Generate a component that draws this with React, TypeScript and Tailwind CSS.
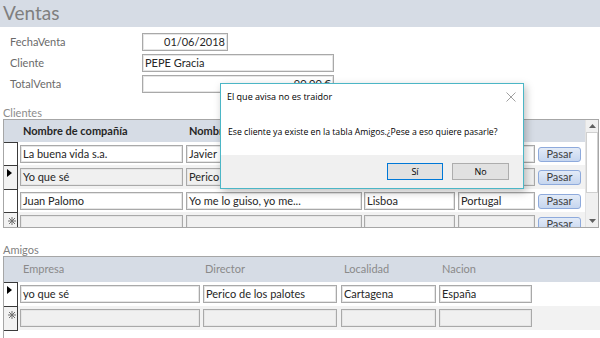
import React from 'react'

const font = "font-['Lato','Liberation_Sans',sans-serif]"

function Field({ className, text, right, dim }: { className: string; text?: string; right?: boolean; dim?: boolean }) {
    return (
        <div
            className={`h-[18px] shrink-0 overflow-hidden whitespace-nowrap border border-[#a9a9a9] px-[2px] text-[11px] leading-[16px] text-[#262626] shadow-[inset_0_0_0_1px_#e6e6e6] ${right ? 'text-right' : ''} ${dim ? 'bg-[#f0f0f0]' : ''} ${className}`}
        >
            {text}
        </div>
    )
}

function Selector({ mark }: { mark?: 'current' | 'new' }) {
    return (
        <div className="flex w-[14px] shrink-0 self-stretch border-t border-r border-[#3a3a3a] pl-[3px] pt-[3px]">
            {mark === 'current' && (
                <svg width="5" height="8" viewBox="0 0 5 8">
                    <path d="M0 0 L5 4 L0 8 Z" fill="#000" />
                </svg>
            )}
            {mark === 'new' && (
                <svg width="8" height="8" viewBox="0 0 8 8" className="ml-[1px] mt-[1px]">
                    <path d="M4 0 V8 M0 4 H8 M1 1 L7 7 M7 1 L1 7" stroke="#707070" strokeWidth="1" />
                </svg>
            )}
        </div>
    )
}

function Pasar() {
    return (
        <div className="ml-[3px] mt-[5px] flex h-[15px] w-[43px] shrink-0 items-center justify-center rounded-[3px] border border-[#8eaadc] bg-gradient-to-b from-[#e3ebf7] to-[#c6d6ef] text-[11px] text-[#404040]">
            Pasar
        </div>
    )
}

const clientes = [
    { a: 'La buena vida s.a.', b: 'Javier', c: '', d: '', h: 'h-[23px]' },
    { a: 'Yo que sé', b: 'Perico', c: '', d: '', h: 'h-[24px]', gray: true, current: true },
    { a: 'Juan Palomo', b: 'Yo me lo guiso, yo me...', c: 'Lisboa', d: 'Portugal', h: 'h-[23px]' },
    { a: '', b: '', c: '', d: '', h: 'h-[23px]', gray: true, isNew: true },
]

export default function App() {
    return (
        <div className={`relative h-[338px] w-[600px] overflow-hidden bg-white ${font}`}>
            {/* Title bar */}
            <div className="h-[27px] bg-[#d6dce5] pl-[3px] text-[19px] leading-[26px] text-[#7f7f7f]">Ventas</div>

            {/* Main fields */}
            <div className="mt-[6px] flex flex-col gap-[3px]">
                <div className="flex items-center">
                    <div className="w-[142px] pl-[10px] text-[11px] text-[#6a6a6a]">FechaVenta</div>
                    <Field className="w-[86px]" text="01/06/2018" right />
                </div>
                <div className="flex items-center">
                    <div className="w-[142px] pl-[10px] text-[11px] text-[#6a6a6a]">Cliente</div>
                    <Field className="w-[192px]" text="PEPE Gracia" />
                </div>
                <div className="flex items-center">
                    <div className="w-[142px] pl-[10px] text-[11px] text-[#6a6a6a]">TotalVenta</div>
                    <Field className="w-[192px]" text="90,00 €" right />
                </div>
            </div>

            {/* Clientes subform */}
            <div className="mt-[13px] h-[13px] pl-[3px] text-[11px] leading-[13px] text-[#8c8c8c]">Clientes</div>
            <div className="ml-[3px] flex h-[109px] w-[596px] overflow-hidden border border-[#a6a6a6]">
                <div className="flex-1">
                    <div className="flex h-[22px] items-center bg-[#d6dce5] text-[11px] font-bold text-[#262626]">
                        <div className="w-[18px]" />
                        <div className="w-[166px] pl-[1px]">Nombre de compañía</div>
                        <div className="pl-[1px]">Nombre</div>
                    </div>
                    {clientes.map((r, i) => (
                        <div key={i} className={`flex ${r.h} ${r.gray ? 'bg-[#f2f2f2]' : ''}`}>
                            <Selector mark={r.current ? 'current' : r.isNew ? 'new' : undefined} />
                            <Field className="ml-[2px] mt-[3px] w-[163px]" text={r.a} dim={r.gray} />
                            <Field className="ml-[3px] mt-[3px] w-[176px]" text={r.b} dim={r.gray} />
                            <Field className="ml-[2px] mt-[3px] w-[91px]" text={r.c} dim={r.gray} />
                            <Field className="ml-[3px] mt-[3px] w-[77px]" text={r.d} dim={r.gray} />
                            <Pasar />
                        </div>
                    ))}
                </div>
                {/* Scrollbar */}
                <div className="flex w-[13px] shrink-0 flex-col border-l border-[#e3e3e3] bg-[#f0f0f0]">
                    <div className="flex h-[12px] items-center justify-center">
                        <svg width="7" height="4" viewBox="0 0 7 4">
                            <path d="M0 4 L3.5 0 L7 4 Z" fill="#606060" />
                        </svg>
                    </div>
                    <div className="h-[61px] border border-[#d0d0d0] bg-white" />
                    <div className="flex-1" />
                    <div className="flex h-[12px] items-center justify-center">
                        <svg width="7" height="4" viewBox="0 0 7 4">
                            <path d="M0 0 L3.5 4 L7 0 Z" fill="#606060" />
                        </svg>
                    </div>
                </div>
            </div>

            {/* Amigos subform */}
            <div className="mt-[15px] h-[13px] pl-[3px] text-[11px] leading-[13px] text-[#7f7f7f]">Amigos</div>
            <div className="ml-[3px] w-[600px] border-t border-l border-[#a6a6a6]">
                <div className="flex h-[25px] items-center bg-[#d6dce5] text-[11px] text-[#8a8a8a]">
                    <div className="w-[18px]" />
                    <div className="w-[183px] pl-[1px]">Empresa</div>
                    <div className="w-[138px]">Director</div>
                    <div className="w-[98px] pl-[1px]">Localidad</div>
                    <div className="pl-[1px]">Nacion</div>
                </div>
                <div className="flex h-[24px]">
                    <Selector mark="current" />
                    <Field className="ml-[2px] mt-[3px] w-[180px]" text="yo que sé" />
                    <Field className="ml-[3px] mt-[3px] w-[134px]" text="Perico de los palotes" />
                    <Field className="ml-[4px] mt-[3px] w-[95px]" text="Cartagena" />
                    <Field className="ml-[3px] mt-[3px] w-[93px]" text="España" />
                </div>
                <div className="flex h-[24px] bg-[#f2f2f2]">
                    <Selector mark="new" />
                    <Field className="ml-[2px] mt-[3px] w-[180px]" dim />
                    <Field className="ml-[3px] mt-[3px] w-[134px]" dim />
                    <Field className="ml-[4px] mt-[3px] w-[95px]" dim />
                    <Field className="ml-[3px] mt-[3px] w-[93px]" dim />
                </div>
                <div className="h-[8px] w-[14px] border-t border-[#3a3a3a]" />
            </div>

            {/* Message box */}
            <div className="absolute left-[220px] top-[83px] flex h-[106px] w-[304px] flex-col border border-[#4bb6c6] bg-white font-['Open_Sans',sans-serif] text-[9px] text-black shadow-[2px_3px_8px_rgba(0,0,0,0.25)]">
                <div className="flex h-[26px] items-center justify-between pl-[6px] pr-[7px]">
                    <span>El que avisa no es traidor</span>
                    <svg width="10" height="10" viewBox="0 0 10 10">
                        <path d="M0.5 0.5 L9.5 9.5 M9.5 0.5 L0.5 9.5" stroke="#a0a0a0" strokeWidth="1" />
                    </svg>
                </div>
                <div className="flex h-[45px] items-center pl-[7px] text-[8.7px]">
                    Ese cliente ya existe en la tabla Amigos.¿Pese a eso quiere pasarle?
                </div>
                <div className="flex flex-1 items-center justify-end gap-[9px] bg-[#f0f0f0] pr-[14px]">
                    <div className="flex h-[17px] w-[56px] items-center justify-center border border-[#0078d7] bg-[#e1e1e1]">Sí</div>
                    <div className="flex h-[17px] w-[57px] items-center justify-center border border-[#adadad] bg-[#e1e1e1]">No</div>
                </div>
            </div>
        </div>
    )
}
